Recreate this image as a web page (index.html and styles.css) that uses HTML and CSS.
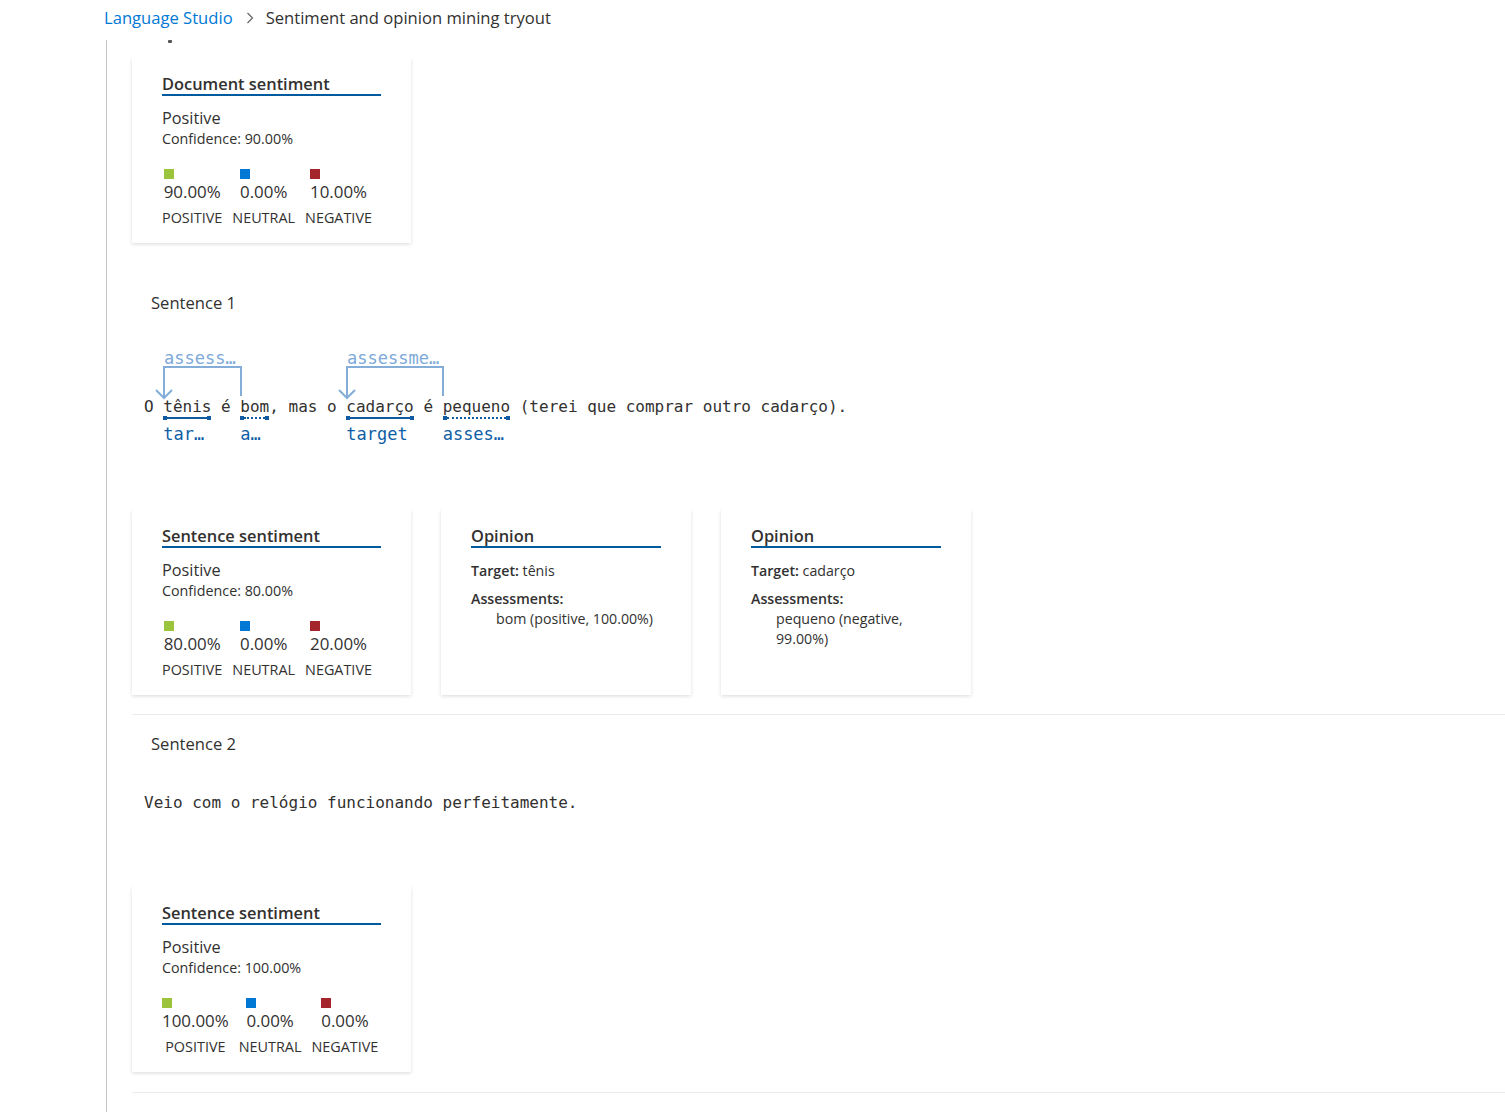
FILE: index.html
```html
<!DOCTYPE html>
<html lang="en">
<head>
<meta charset="utf-8">
<title>Sentiment and opinion mining tryout</title>
<link rel="stylesheet" href="styles.css">
</head>
<body>
<nav class="breadcrumb">
  <a class="crumb-link" href="#">Language Studio</a>
  <svg class="chev" width="8" height="12" viewBox="0 0 8 12" aria-hidden="true"><path d="M1.5 1 L6.5 6 L1.5 11" fill="none" stroke="#605e5c" stroke-width="1.1"/></svg>
  <span class="crumb-current">Sentiment and opinion mining tryout</span>
</nav>

<main class="main">
  <div class="scroll-mark"></div>

  <div class="card sent-card">
    <div class="card-title">Document sentiment</div>
    <div class="sent-label">Positive</div>
    <div class="confidence">Confidence: 90.00%</div>
    <div class="scores">
      <div class="score"><div class="score-val"><span class="sq pos"></span><span class="val">90.00%</span></div><div class="score-name">POSITIVE</div></div>
      <div class="score"><div class="score-val"><span class="sq neu"></span><span class="val">0.00%</span></div><div class="score-name">NEUTRAL</div></div>
      <div class="score"><div class="score-val"><span class="sq neg"></span><span class="val">10.00%</span></div><div class="score-name">NEGATIVE</div></div>
    </div>
  </div>

  <section class="sentence first">
    <div class="sentence-label">Sentence 1</div>
    <div class="annot with-arcs"><svg class="arcs" width="320" height="60" viewBox="0 0 320 60" aria-hidden="true"><g fill="none" stroke="#84aed8" stroke-width="2"><path d="M97 51 V22 H20 V52"/><path d="M12 45 L20 53 L28 45"/><path d="M299 51 V22 H203 V52"/><path d="M195 45 L203 53 L211 45"/></g><text class="arc-label" x="20" y="19">assess…</text><text class="arc-label" x="203" y="19">assessme…</text></svg><span class="plain">O </span><span class="tok"><span class="w">tênis</span><span class="bar"><span class="ln"></span></span><span class="lab">tar…</span></span><span class="plain"> é </span><span class="tok"><span class="w">bom</span><span class="bar dotted"><span class="ln"></span></span><span class="lab">a…</span></span><span class="plain">, mas o </span><span class="tok"><span class="w">cadarço</span><span class="bar"><span class="ln"></span></span><span class="lab">target</span></span><span class="plain"> é </span><span class="tok"><span class="w">pequeno</span><span class="bar dotted"><span class="ln"></span></span><span class="lab">asses…</span></span><span class="plain"> (terei que comprar outro cadarço).</span></div>
    <div class="cards-row">
      <div class="card sent-card">
        <div class="card-title">Sentence sentiment</div>
        <div class="sent-label">Positive</div>
        <div class="confidence">Confidence: 80.00%</div>
        <div class="scores">
          <div class="score"><div class="score-val"><span class="sq pos"></span><span class="val">80.00%</span></div><div class="score-name">POSITIVE</div></div>
          <div class="score"><div class="score-val"><span class="sq neu"></span><span class="val">0.00%</span></div><div class="score-name">NEUTRAL</div></div>
          <div class="score"><div class="score-val"><span class="sq neg"></span><span class="val">20.00%</span></div><div class="score-name">NEGATIVE</div></div>
        </div>
      </div>
      <div class="card opinion-card">
        <div class="card-title">Opinion</div>
        <div class="op-target"><b>Target:</b> tênis</div>
        <div class="op-assess"><b>Assessments:</b></div>
        <div class="op-item">bom (positive, 100.00%)</div>
      </div>
      <div class="card opinion-card">
        <div class="card-title">Opinion</div>
        <div class="op-target"><b>Target:</b> cadarço</div>
        <div class="op-assess"><b>Assessments:</b></div>
        <div class="op-item">pequeno (negative, 99.00%)</div>
      </div>
    </div>
  </section>

  <section class="sentence">
    <div class="sentence-label">Sentence 2</div>
    <div class="annot plain-text">Veio com o relógio funcionando perfeitamente.</div>
    <div class="cards-row">
      <div class="card sent-card">
        <div class="card-title">Sentence sentiment</div>
        <div class="sent-label">Positive</div>
        <div class="confidence">Confidence: 100.00%</div>
        <div class="scores">
          <div class="score"><div class="score-val"><span class="sq pos"></span><span class="val">100.00%</span></div><div class="score-name">POSITIVE</div></div>
          <div class="score"><div class="score-val"><span class="sq neu"></span><span class="val">0.00%</span></div><div class="score-name">NEUTRAL</div></div>
          <div class="score"><div class="score-val"><span class="sq neg"></span><span class="val">0.00%</span></div><div class="score-name">NEGATIVE</div></div>
        </div>
      </div>
    </div>
  </section>
</main>
</body>
</html>
```

FILE: styles.css
```css
* { box-sizing: border-box; }

html, body {
  margin: 0;
  background: #ffffff;
  color: #323130;
  font-family: "Open Sans", "Noto Sans", sans-serif;
}

body {
  overflow: hidden;
  height: 1112px;
}

.breadcrumb {
  height: 42px;
  display: flex;
  align-items: flex-start;
  padding-left: 104px;
  padding-top: 6px;
  font-size: 16.6px;
  line-height: 23px;
}

.crumb-link {
  color: #0078d4;
  text-decoration: none;
}

.chev {
  margin: 6px 12px 0 13px;
}

.crumb-current {
  color: #323130;
}

.main {
  margin-left: 106px;
  border-left: 1px solid #c8c6c4;
  padding-left: 25px;
  min-height: 1090px;
}

.scroll-mark {
  width: 4px;
  height: 3px;
  margin-top: -2px;
  margin-left: 36px;
  background: #555;
  border-radius: 1px;
}

.card {
  background: #fff;
  box-shadow: 0 1.6px 3.6px 0 rgba(0,0,0,0.132), 0 0.3px 0.9px 0 rgba(0,0,0,0.108);
  padding: 17px 30px 15px;
}

.main > .card { margin-top: 14px; }

.sent-card { width: 279px; }
.opinion-card { width: 250px; }

.card-title {
  font-size: 16.4px;
  font-weight: 600;
  line-height: 20px;
  border-bottom: 2px solid #005a9e;
}

.sent-label {
  margin-top: 11px;
  font-size: 16.3px;
  line-height: 22px;
}

.confidence {
  font-size: 14.3px;
  line-height: 20px;
}

.scores {
  display: flex;
  gap: 10px;
  margin-top: 20px;
}

.score {
  display: flex;
  flex-direction: column;
  align-items: center;
}

.score-val {
  display: flex;
  flex-direction: column;
  align-items: flex-start;
}

.sq {
  width: 10px;
  height: 10px;
  margin-bottom: 2px;
}
.sq.pos { background: #9bc33c; }
.sq.neu { background: #0078d4; }
.sq.neg { background: #a4262c; }

.val {
  font-size: 16.9px;
  line-height: 22px;
}

.score-name {
  margin-top: 5px;
  font-size: 14.4px;
  line-height: 20px;
}

/* Sentences */
.sentence {
  border-bottom: 1px solid #edebe9;
  padding-bottom: 20px;
}

.sentence.first {
  margin-top: 49px;
  padding-bottom: 19px;
}

.sentence:not(.first) { padding-top: 18px; }

.sentence-label {
  padding-left: 19px;
  font-size: 16.6px;
  line-height: 22px;
}

.annot {
  position: relative;
  margin-left: 12px;
  font-family: "DejaVu Sans Mono", "Liberation Mono", monospace;
  font-size: 16px;
  line-height: 20px;
  color: #323130;
}

.annot .plain { white-space: pre; }

.annot.with-arcs {
  margin-top: 31px;
  padding-top: 52px;
  margin-bottom: 65px;
}

.annot.plain-text {
  margin-top: 38px;
  margin-bottom: 73px;
  white-space: pre;
}

.arcs {
  position: absolute;
  top: 0;
  left: 0;
  overflow: visible;
}

.arc-label {
  font-family: "DejaVu Sans Mono", "Liberation Mono", monospace;
  font-size: 17px;
  fill: #7eaad8;
}

.tok {
  display: inline-flex;
  flex-direction: column;
  vertical-align: baseline;
}

.w { line-height: 20px; white-space: pre; }

.bar {
  display: flex;
  align-items: center;
  height: 4px;
  margin-top: -1px;
}
.bar::before,
.bar::after {
  content: "";
  width: 4px;
  height: 4px;
  background: #0f5aa0;
  flex: none;
}
.bar .ln {
  flex: 1;
  border-top: 2px solid #0f5aa0;
}
.bar.dotted .ln {
  border-top-style: dotted;
}

.lab {
  margin-top: 4px;
  font-size: 17px;
  line-height: 20px;
  color: #0f5fa6;
  white-space: nowrap;
}

.cards-row {
  display: flex;
  gap: 30px;
  align-items: stretch;
}

.op-target {
  margin-top: 13px;
  font-size: 14.2px;
  line-height: 20px;
}

.op-assess {
  margin-top: 8px;
  font-size: 14.2px;
  line-height: 20px;
}

.op-target b,
.op-assess b { font-weight: 600; }

.op-item {
  padding-left: 25px;
  font-size: 14.2px;
  line-height: 20px;
}
```
